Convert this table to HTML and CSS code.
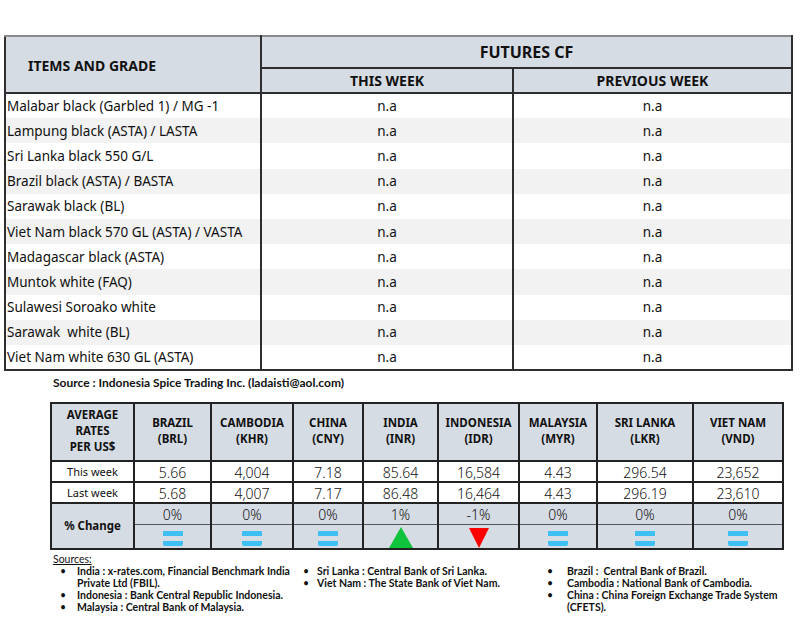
FILE: index.html
```html
<!DOCTYPE html>
<html>
<head>
<meta charset="utf-8">
<link rel="stylesheet" href="styles.css">
</head>
<body>
<div class="page">
  <table class="futures">
    <colgroup><col class="c1"><col class="c2"><col class="c3"></colgroup>
    <thead>
      <tr class="h1">
        <th rowspan="2" class="items">ITEMS AND GRADE</th>
        <th colspan="2" class="fcf">FUTURES CF</th>
      </tr>
      <tr class="h2">
        <th>THIS WEEK</th>
        <th>PREVIOUS WEEK</th>
      </tr>
    </thead>
    <tbody>
      <tr><td>Malabar black (Garbled 1) / MG -1</td><td>n.a</td><td>n.a</td></tr>
      <tr><td>Lampung black (ASTA) / LASTA</td><td>n.a</td><td>n.a</td></tr>
      <tr><td>Sri Lanka black 550 G/L</td><td>n.a</td><td>n.a</td></tr>
      <tr><td>Brazil black (ASTA) / BASTA</td><td>n.a</td><td>n.a</td></tr>
      <tr><td>Sarawak black (BL)</td><td>n.a</td><td>n.a</td></tr>
      <tr><td>Viet Nam black 570 GL (ASTA) / VASTA</td><td>n.a</td><td>n.a</td></tr>
      <tr><td>Madagascar black (ASTA)</td><td>n.a</td><td>n.a</td></tr>
      <tr><td>Muntok white (FAQ)</td><td>n.a</td><td>n.a</td></tr>
      <tr><td>Sulawesi Soroako white</td><td>n.a</td><td>n.a</td></tr>
      <tr><td>Sarawak&nbsp; white (BL)</td><td>n.a</td><td>n.a</td></tr>
      <tr><td>Viet Nam white 630 GL (ASTA)</td><td>n.a</td><td>n.a</td></tr>
    </tbody>
  </table>

  <p class="source">Source : Indonesia Spice Trading Inc. (ladaisti@aol.com)</p>

  <table class="rates">
    <colgroup>
      <col class="w83"><col class="w77"><col class="w82"><col class="w70"><col class="w75"><col class="w81"><col class="w78"><col class="w96"><col class="w90">
    </colgroup>
    <thead>
      <tr>
        <th>AVERAGE<br>RATES<br>PER US$</th>
        <th>BRAZIL<br>(BRL)</th>
        <th>CAMBODIA<br>(KHR)</th>
        <th>CHINA<br>(CNY)</th>
        <th>INDIA<br>(INR)</th>
        <th>INDONESIA<br>(IDR)</th>
        <th>MALAYSIA<br>(MYR)</th>
        <th>SRI LANKA<br>(LKR)</th>
        <th>VIET NAM<br>(VND)</th>
      </tr>
    </thead>
    <tbody>
      <tr class="val">
        <td class="lbl">This week</td><td>5.66</td><td>4,004</td><td>7.18</td><td>85.64</td><td>16,584</td><td>4.43</td><td>296.54</td><td>23,652</td>
      </tr>
      <tr class="val">
        <td class="lbl">Last week</td><td>5.68</td><td>4,007</td><td>7.17</td><td>86.48</td><td>16,464</td><td>4.43</td><td>296.19</td><td>23,610</td>
      </tr>
      <tr class="pct">
        <td rowspan="2" class="chg">% Change</td><td>0%</td><td>0%</td><td>0%</td><td>1%</td><td>-1%</td><td>0%</td><td>0%</td><td>0%</td>
      </tr>
      <tr class="ico">
        <td><span class="eq"></span></td>
        <td><span class="eq"></span></td>
        <td><span class="eq"></span></td>
        <td><span class="up"></span></td>
        <td><span class="down"></span></td>
        <td><span class="eq"></span></td>
        <td><span class="eq"></span></td>
        <td><span class="eq"></span></td>
      </tr>
    </tbody>
  </table>

  <div class="sources">
    <div class="stitle">Sources:</div>
    <div class="scols">
      <ul class="s1">
        <li>India : x-rates.com, Financial Benchmark India Private Ltd (FBIL).</li>
        <li>Indonesia : Bank Central Republic Indonesia.</li>
        <li>Malaysia : Central Bank of Malaysia.</li>
      </ul>
      <ul class="s2">
        <li>Sri Lanka : Central Bank of Sri Lanka.</li>
        <li>Viet Nam : The State Bank of Viet Nam.</li>
      </ul>
      <ul class="s3">
        <li>Brazil :&nbsp; Central Bank of Brazil.</li>
        <li>Cambodia : National Bank of Cambodia.</li>
        <li>China : China Foreign Exchange Trade System (CFETS).</li>
      </ul>
    </div>
  </div>
</div>
</body>
</html>
```

FILE: styles.css
```css
* { box-sizing: border-box; }
html, body { margin: 0; padding: 0; background: #fff; }
body { font-family: "Noto Sans", "Open Sans", sans-serif; color: #111; }
.page { padding: 35px 0 0 4px; width: 800px; }

.futures {
  border-collapse: collapse;
  table-layout: fixed;
  width: 787px;
  border: 2px solid #2e2e2e;
  border-top-color: #8a8a8a;
}
.futures .c1 { width: 256px; }
.futures .c2 { width: 252px; }
.futures .c3 { width: 279px; }
.futures th {
  background: #d6dce4;
  font-weight: 700;
  font-size: 14px;
  color: #111;
  padding: 0;
}
.futures th.items { text-align: left; padding-left: 22px; padding-top: 2px; border-right: 2px solid #2e2e2e; border-bottom: 2px solid #2e2e2e; }
.futures th.fcf { font-size: 16px; height: 32px; border-bottom: 2px solid #2e2e2e; }
.futures .h2 th { height: 25px; border-bottom: 2px solid #2e2e2e; }
.futures .h2 th:first-child { border-right: 2px solid #2e2e2e; }
.futures td {
  height: 25.2px;
  padding: 0;
  font-size: 13.5px;
  line-height: 18px;
  white-space: nowrap;
}
.futures td:first-child { padding-left: 1px; border-right: 2px solid #2e2e2e; }
.futures td:nth-child(2) { text-align: center; border-right: 2px solid #2e2e2e; }
.futures td:nth-child(3) { text-align: center; }
.futures tbody tr:nth-child(even) td { background: #f2f2f2; }

.source {
  margin: 4px 0 0 49px;
  font-size: 12px;
  font-weight: 700;
  font-family: "Lato", "Noto Sans", sans-serif;
  line-height: 15px;
}

.rates {
  margin: 12px 0 0 46px;
  border-collapse: collapse;
  table-layout: fixed;
  width: 732px;
  border: 2px solid #222;
}
.w83 { width: 83px; } .w77 { width: 77px; } .w82 { width: 82px; }
.w70 { width: 70px; } .w75 { width: 75px; } .w81 { width: 81px; }
.w78 { width: 78px; } .w96 { width: 96px; } .w90 { width: 90px; }
.rates th, .rates td { border: 2px solid #222; padding: 0; text-align: center; }
.rates th {
  background: #d6dce4;
  height: 58px;
  font-size: 11.5px;
  line-height: 16px;
  font-weight: 700;
  color: #111;
  padding-bottom: 2px;
}
.rates .val td {
  height: 21px;
  font-size: 14px;
  font-weight: 300;
  line-height: 16px;
  padding-top: 3px;
  vertical-align: bottom;
}
.rates .val td.lbl { font-size: 11px; font-weight: 400; vertical-align: middle; padding-top: 0; }
.rates .pct td {
  background: #d6dce4;
  height: 21px;
  font-size: 14px;
  font-weight: 300;
  line-height: 16px;
  border-bottom-width: 1px;
  border-bottom-color: #555;
  padding-top: 2px;
}
.rates .pct td.chg {
  font-size: 11.5px;
  font-weight: 700;
  border-bottom: 2px solid #222;
  padding-top: 0;
}
.rates .ico td {
  background: #d6dce4;
  height: 25px;
  border-top-width: 1px;
  border-top-color: #555;
  vertical-align: middle;
}
.eq {
  display: inline-block;
  width: 20px;
  height: 16px;
  vertical-align: middle;
  background:
    linear-gradient(#3ec0f5, #3ec0f5) 0 1px / 20px 5px no-repeat,
    linear-gradient(#3ec0f5, #3ec0f5) 0 11px / 20px 5px no-repeat;
  border-radius: 2px;
}
.up {
  display: inline-block;
  width: 0; height: 0;
  border-left: 12px solid transparent;
  border-right: 12px solid transparent;
  border-bottom: 21px solid #10c33d;
  vertical-align: middle;
  margin-top: 1px;
}
.down {
  display: inline-block;
  width: 0; height: 0;
  border-left: 10.5px solid transparent;
  border-right: 10.5px solid transparent;
  border-top: 20px solid #ff0000;
  vertical-align: middle;
  margin-top: 1px;
}

.sources {
  margin: 3px 0 0 49px;
  font-family: "Lato", "Noto Sans", sans-serif;
  font-size: 10.5px;
  font-weight: 700;
  line-height: 12px;
  color: #111;
}
.stitle { text-decoration: underline; font-weight: 400; }
.scols { display: grid; grid-template-columns: 250px 244px 245px; }
.scols ul { margin: 0; padding: 0; list-style: none; }
.scols li { position: relative; padding-left: 24px; }
.scols li::before {
  content: "\2022";
  position: absolute;
  left: 7px;
  top: 0;
  font-weight: 400;
}
.s2 li { padding-left: 14px; }
.s2 li::before { left: 0; }
.s3 li { padding-left: 20px; }
.s3 li::before { left: 0; }
```
